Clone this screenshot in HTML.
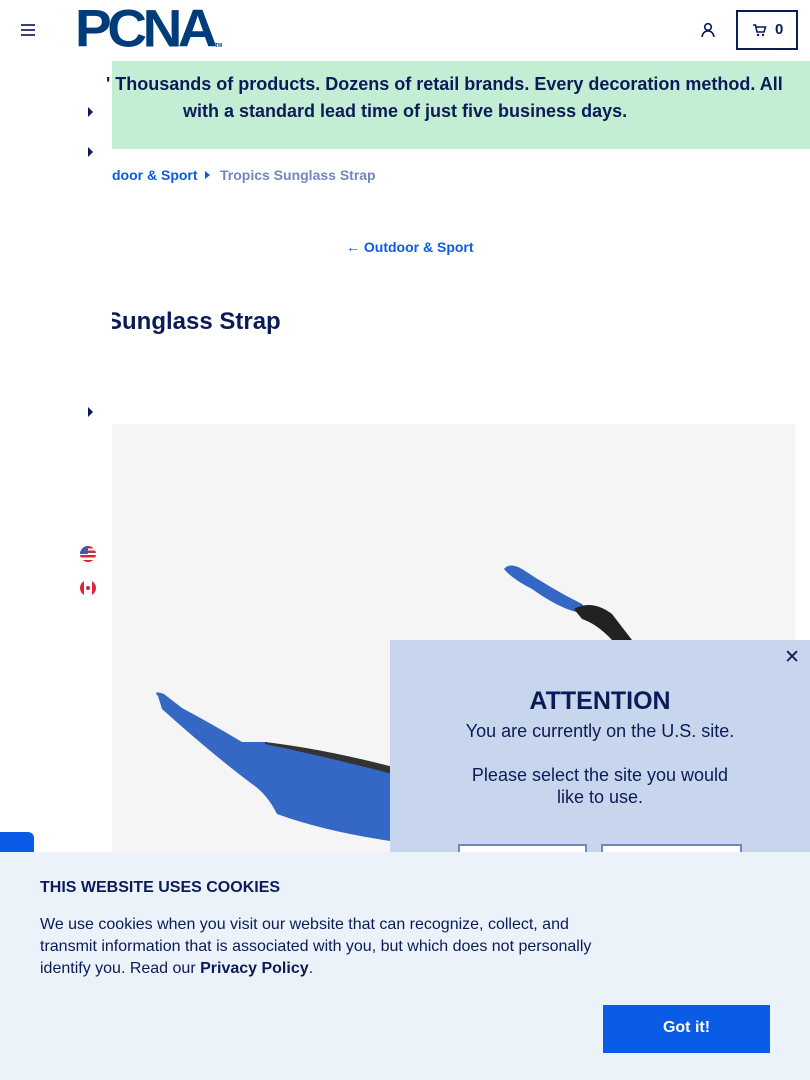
<!DOCTYPE html>
<html><head><meta charset="utf-8"><style>
*{margin:0;padding:0;box-sizing:border-box}
body{width:810px;height:1080px;overflow:hidden;position:relative;background:#fff;font-family:"Liberation Sans",Arial,sans-serif;color:#0b1b57}
.abs{position:absolute}
.banner{left:112px;top:61px;width:698px;height:88px;background:#c4eed4;font-weight:bold;font-size:18px;line-height:27px;color:#0b1b57;white-space:nowrap}
.tri{width:0;height:0;border-top:5px solid transparent;border-bottom:5px solid transparent;border-left:5px solid #0b1b57}
</style></head><body>
<div class="abs" style="left:21px;top:24px;width:14px">
<div style="height:2px;background:#3a3f80;margin-bottom:3px"></div><div style="height:2px;background:#3a3f80;margin-bottom:3px"></div><div style="height:2px;background:#3a3f80"></div></div>
<div class="abs" style="left:75px;top:-2px;font-weight:900;font-size:50px;letter-spacing:-4px;color:#003b7a;transform:scale(1.1,1.05);transform-origin:left top">PCNA</div>
<div class="abs" style="left:215px;top:43px;font-size:5px;color:#003b7a;font-weight:bold">TM</div>
<svg class="abs" style="left:700px;top:22px" width="16" height="16" viewBox="0 0 16 16"><circle cx="8" cy="5" r="3.3" fill="none" stroke="#0b1b57" stroke-width="1.6"/><path d="M2 15 Q3 9 8 9 Q13 9 14 15" fill="none" stroke="#0b1b57" stroke-width="1.6"/></svg>
<div class="abs" style="left:736px;top:10px;width:62px;height:40px;border:2px solid #0b1b57"></div>
<svg class="abs" style="left:752px;top:23px" width="15" height="14" viewBox="0 0 15 14"><path d="M1 2h2.5l1.5 7h7l1.5-5H4" fill="none" stroke="#0b1b57" stroke-width="1.6"/><circle cx="6" cy="12" r="1.2" fill="#0b1b57"/><circle cx="11" cy="12" r="1.2" fill="#0b1b57"/></svg>
<div class="abs" style="left:775px;top:21px;font-weight:bold;font-size:15px">0</div>
<div class="abs banner"><div class="abs" style="left:-6px;top:10px">' Thousands of products. Dozens of retail brands. Every decoration method. All</div><div class="abs" style="left:71px;top:37px">with a standard lead time of just five business days.</div></div>
<div class="abs tri" style="left:88px;top:107px"></div>
<div class="abs tri" style="left:88px;top:147px"></div>
<div class="abs tri" style="left:88px;top:407px"></div>
<div class="abs" style="left:112px;top:167px;font-size:14px;font-weight:bold;color:#0a5ce6;white-space:nowrap;">door &amp; Sport</div>
<div class="abs" style="left:205px;top:171px;width:0;height:0;border-top:4px solid transparent;border-bottom:4px solid transparent;border-left:5px solid #0a5ce6"></div>
<div class="abs" style="left:220px;top:167px;font-size:14px;font-weight:bold;color:#7585c0">Tropics Sunglass Strap</div>
<div class="abs" style="left:346px;top:239px;font-size:14px;font-weight:bold;color:#0a5ce6">← Outdoor &amp; Sport</div>
<div class="abs" style="left:106px;top:308px;font-size:24px;font-weight:bold;color:#0b1b57;clip-path:inset(0 0 0 6px)">Sunglass Strap</div>
<div class="abs" style="left:80px;top:546px;width:16px;height:16px;border-radius:50%;background:repeating-linear-gradient(#d8263a 0 2.3px,#fff 2.3px 4.6px);overflow:hidden"><div style="width:8px;height:8px;background:#3a5bb0"></div></div>
<div class="abs" style="left:80px;top:580px;width:16px;height:16px;border-radius:50%;background:linear-gradient(90deg,#d8263a 0 4px,#fff 4px 12px,#d8263a 12px)"><div style="position:absolute;left:6px;top:6px;width:4px;height:4px;background:#d8263a;border-radius:50%"></div></div>
<div class="abs" style="left:112px;top:424px;width:683px;height:460px;background:#f5f5f5"></div>
<svg class="abs" style="left:112px;top:424px" width="683" height="430" viewBox="0 0 683 430">
<path d="M46 272 Q40 266 52 270 L70 284 Q100 300 130 318 L153 318 Q220 330 300 355 L300 420 Q220 410 165 390 Q155 370 140 360 Q100 330 50 285 Z" fill="#3568c4"/>
<path d="M153 318 Q220 326 300 348 L300 355 Q220 334 153 320Z" fill="#333"/>
<path d="M392 145 Q398 138 410 145 Q440 165 470 180 L478 190 Q455 190 420 165 Q400 155 392 145Z" fill="#3568c4"/>
<path d="M462 185 Q480 175 500 190 L520 216 L500 216 Q485 200 470 195Z" fill="#222"/>
</svg>
<div class="abs" style="left:0;top:832px;width:34px;height:30px;background:#0a5ce6;border-radius:0 6px 0 0"></div>
<div class="abs" style="left:390px;top:640px;width:420px;height:230px;background:#c7d6ec;text-align:center">
<div class="abs" style="right:10px;top:6px;font-size:19px;color:#0b1b57">✕</div>
<div style="margin-top:47px;font-size:25px;font-weight:bold;color:#0b1b57">ATTENTION</div>
<div style="margin-top:4px;font-size:18px;color:#0b1b57;line-height:22px">You are currently on the U.S. site.<br><br>Please select the site you would<br>like to use.</div>
<div class="abs" style="left:68px;top:204px;width:129px;height:30px;border:2px solid #7585c0;background:#fff"></div>
<div class="abs" style="left:211px;top:204px;width:141px;height:30px;border:2px solid #7585c0;background:#fff"></div>
</div>
<div class="abs" style="left:0;top:852px;width:810px;height:228px;background:#ebf2fa">
<div class="abs" style="left:40px;top:27px;font-size:16px;font-weight:bold;color:#0b1b57">THIS WEBSITE USES COOKIES</div>
<div class="abs" style="left:40px;top:62px;width:560px;font-size:16px;line-height:22px;color:#0b1b57">We use cookies when you visit our website that can recognize, collect, and transmit information that is associated with you, but which does not personally identify you. Read our <b>Privacy Policy</b>.</div>
<div class="abs" style="left:603px;top:153px;width:167px;height:48px;background:#0a5ce6;color:#fff;font-weight:bold;font-size:16px;text-align:center;line-height:46px">Got it!</div>
</div>
</body></html>
